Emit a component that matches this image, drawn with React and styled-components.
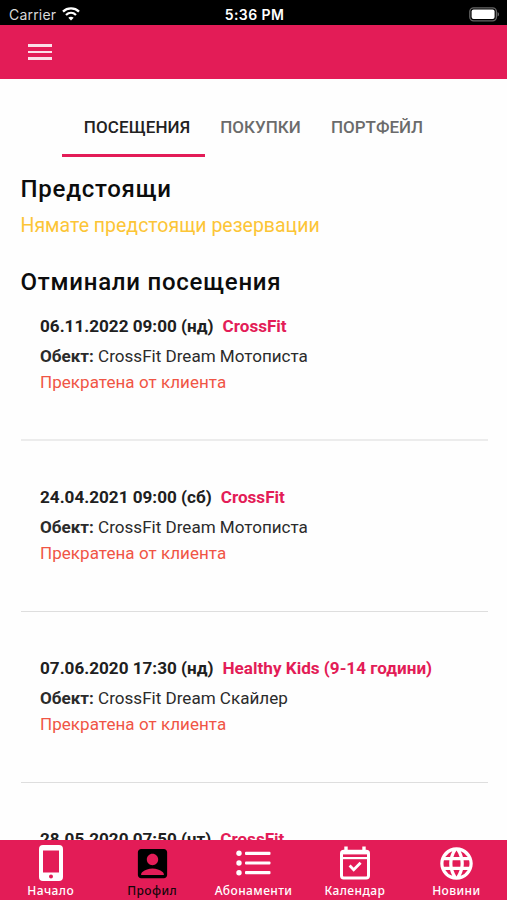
import React from 'react';
import styled, { createGlobalStyle } from 'styled-components';
import { MdAccountBox, MdLanguage } from 'react-icons/md';

const pink = '#e31c57';

const GlobalStyle = createGlobalStyle`
  * {
    box-sizing: border-box;
  }
  body {
    margin: 0;
    background: #fff;
    font-family: Roboto, 'Noto Sans', sans-serif;
  }
`;

const Screen = styled.div`
  display: flex;
  flex-direction: column;
  width: 507px;
  height: 900px;
  overflow: hidden;
  background: #fefefe;
`;

const StatusBar = styled.div`
  display: grid;
  grid-template-columns: 1fr auto 1fr;
  align-items: center;
  flex: none;
  height: 25px;
  padding: 3px 7px 0 9px;
  background: #000;
  color: #fff;
  font-family: Inter, sans-serif;
`;

const Carrier = styled.div`
  display: flex;
  align-items: center;
  gap: 6px;
  font-size: 14px;
  letter-spacing: 0.2px;
  color: #d8d8d8;
`;

const Clock = styled.div`
  font-size: 14px;
  font-weight: 600;
  letter-spacing: 0.4px;
`;

const BatteryIcon = styled.svg`
  justify-self: end;
`;

const TopBar = styled.header`
  display: flex;
  align-items: center;
  flex: none;
  height: 54px;
  padding-left: 28px;
  background: ${pink};
`;

const MenuButton = styled.button`
  display: flex;
  flex-direction: column;
  gap: 4px;
  width: 24px;
  padding: 0;
  border: none;
  background: none;
`;

const MenuLine = styled.span`
  height: 2.6px;
  background: #fbdfe8;
`;

const Tabs = styled.div`
  display: flex;
  flex: none;
  height: 58px;
  margin: 20px 0 0 62px;
`;

const Tab = styled.button`
  width: ${({ $width }) => $width}px;
  padding: ${({ $active }) => ($active ? '1px 0 0 7px' : '1px 0 0')};
  border: none;
  border-bottom: 3px solid ${({ $active }) => ($active ? pink : 'transparent')};
  background: none;
  font: 500 17px Roboto, sans-serif;
  letter-spacing: ${({ $active }) => ($active ? 0.1 : 0)}px;
  white-space: nowrap;
  color: ${({ $active }) => ($active ? '#222' : '#6b6b6b')};
`;

const Content = styled.main`
  flex: 1;
  min-height: 0;
  overflow: hidden;
  padding: 16px 19px 0 20.5px;
`;

const Title = styled.h2`
  margin: 0;
  font-size: 24px;
  font-weight: 500;
  line-height: 32px;
  letter-spacing: 0.75px;
  color: #0c0c0c;
`;

const EmptyNote = styled.p`
  margin: 10px 0 29px;
  font-size: 19.5px;
  line-height: 22px;
  color: #fcc536;
`;

const VisitList = styled.ul`
  margin: 0;
  padding: 0;
  list-style: none;
`;

const VisitItem = styled.li`
  height: 171px;
  padding: 45px 19px 0 19.5px;
  border-bottom: 1px solid #dedede;

  &:first-child {
    height: 143px;
    padding-top: 17px;
    border-bottom: 2px solid #ececec;
  }
`;

const VisitHead = styled.div`
  display: flex;
  gap: 9px;
  font-size: 17.12px;
  font-weight: 700;
  line-height: 22px;
  color: #202020;
`;

const VisitName = styled.span`
  color: ${pink};
`;

const VisitPlace = styled.div`
  margin-top: 8px;
  font-size: 17.07px;
  line-height: 22px;
  color: #2b2b2b;
`;

const VisitStatus = styled.div`
  margin-top: 4px;
  font-size: 17px;
  line-height: 22px;
  letter-spacing: 0.05px;
  color: #f05545;
`;

const BottomNav = styled.nav`
  display: grid;
  grid-template-columns: repeat(5, 1fr);
  flex: none;
  height: 60px;
  background: ${pink};
`;

const NavItem = styled.a`
  display: flex;
  flex-direction: column;
  align-items: center;
  justify-content: flex-end;
  padding-bottom: 1px;
  font: 500 12px/16px 'Noto Sans', sans-serif;
  letter-spacing: 0.4px;
  color: ${({ $active }) => ($active ? '#14060a' : '#fff')};
`;

const IconBox = styled.span`
  display: flex;
  align-items: center;
  justify-content: center;
  height: 38px;
  margin-bottom: 1px;
`;

const WifiIcon = () => (
    <svg width="18" height="14" viewBox="0 0 18 14" fill="none" stroke="#fff" strokeWidth="2.3">
        <path d="M1 4.6C5.4 0.4 12.6 0.4 17 4.6" />
        <path d="M4 8C7 5.2 11 5.2 14 8" />
        <path d="M9 13.6L6.3 10.8C7.9 9.4 10.1 9.4 11.7 10.8Z" fill="#fff" stroke="none" />
    </svg>
);

const PhoneIcon = () => (
    <svg width="24" height="36" viewBox="0 0 24 36">
        <path
            fill="#fff"
            fillRule="evenodd"
            d="M4 0H20A4 4 0 0 1 24 4V32A4 4 0 0 1 20 36H4A4 4 0 0 1 0 32V4A4 4 0 0 1 4 0ZM4 5.5V27.5H20V5.5ZM12 29.5A2 2 0 1 0 12 33.5A2 2 0 1 0 12 29.5Z"
        />
    </svg>
);

const ListIcon = () => (
    <svg width="35" height="26" viewBox="0 0 35 26" fill="#fff">
        <circle cx="3" cy="3.3" r="2.7" />
        <circle cx="3" cy="13" r="2.7" />
        <circle cx="3" cy="22.7" r="2.7" />
        <rect x="9" y="1.7" width="25.5" height="3.2" rx="1" />
        <rect x="9" y="11.4" width="25.5" height="3.2" rx="1" />
        <rect x="9" y="21.1" width="25.5" height="3.2" rx="1" />
    </svg>
);

const CalendarIcon = () => (
    <svg width="30" height="34" viewBox="0 0 30 34" fill="none" stroke="#fff">
        <rect x="1.5" y="5.2" width="27" height="26.8" rx="2.2" strokeWidth="3" />
        <path d="M1.5 5H28.5V8.4H1.5Z" fill="#fff" stroke="none" />
        <path d="M2 12.1H28" strokeWidth="2.2" />
        <path d="M6 0.5V6M24 0.5V6" strokeWidth="3.4" />
        <path d="M9.6 19.6L13.7 23.8L20.6 16.8" strokeWidth="2.8" />
    </svg>
);

const visits = [
    { date: '06.11.2022 09:00 (нд)', name: 'CrossFit', place: 'CrossFit Dream Мотописта' },
    { date: '24.04.2021 09:00 (сб)', name: 'CrossFit', place: 'CrossFit Dream Мотописта' },
    { date: '07.06.2020 17:30 (нд)', name: 'Healthy Kids (9-14 години)', place: 'CrossFit Dream Скайлер' },
    { date: '28.05.2020 07:50 (чт)', name: 'CrossFit' },
];

const navItems = [
    { label: 'Начало', icon: <PhoneIcon /> },
    { label: 'Профил', icon: <MdAccountBox size={39} color="#000" />, active: true },
    { label: 'Абонаменти', icon: <ListIcon /> },
    { label: 'Календар', icon: <CalendarIcon /> },
    { label: 'Новини', icon: <MdLanguage size={39} /> },
];

const App = () => (
    <>
        <GlobalStyle />
        <Screen>
            <StatusBar>
                <Carrier>
                    Carrier
                    <WifiIcon />
                </Carrier>
                <Clock>5:36 PM</Clock>
                <BatteryIcon width="31" height="15" viewBox="0 0 31 15">
                    <rect x="0.8" y="0.8" width="26.6" height="13" rx="3.8" fill="none" stroke="#666" strokeWidth="1.3" />
                    <rect x="2.6" y="2.6" width="23" height="9.4" rx="2" fill="#fff" />
                    <path d="M28.6 5V9.6C30.4 8.8 30.4 5.8 28.6 5Z" fill="#777" />
                </BatteryIcon>
            </StatusBar>
            <TopBar>
                <MenuButton>
                    <MenuLine />
                    <MenuLine />
                    <MenuLine />
                </MenuButton>
            </TopBar>
            <Tabs>
                <Tab $active $width={143}>ПОСЕЩЕНИЯ</Tab>
                <Tab $width={111}>ПОКУПКИ</Tab>
                <Tab $width={122}>ПОРТФЕЙЛ</Tab>
            </Tabs>
            <Content>
                <Title>Предстоящи</Title>
                <EmptyNote>Нямате предстоящи резервации</EmptyNote>
                <Title>Отминали посещения</Title>
                <VisitList>
                    {visits.map(({ date, name, place }) => (
                        <VisitItem key={date}>
                            <VisitHead>
                                {date}
                                <VisitName>{name}</VisitName>
                            </VisitHead>
                            {place && (
                                <>
                                    <VisitPlace>
                                        <b>Обект:</b> {place}
                                    </VisitPlace>
                                    <VisitStatus>Прекратена от клиента</VisitStatus>
                                </>
                            )}
                        </VisitItem>
                    ))}
                </VisitList>
            </Content>
            <BottomNav>
                {navItems.map(({ label, icon, active }) => (
                    <NavItem key={label} $active={active}>
                        <IconBox>{icon}</IconBox>
                        {label}
                    </NavItem>
                ))}
            </BottomNav>
        </Screen>
    </>
);

export default App;
